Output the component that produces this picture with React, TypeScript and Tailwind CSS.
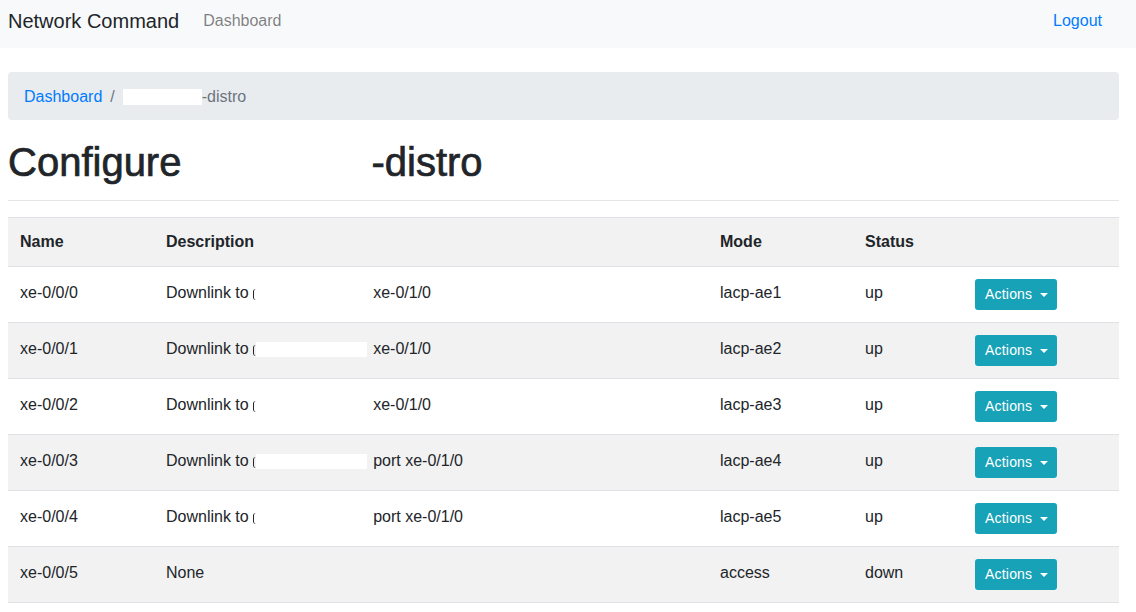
import React from 'react';

type Port = {
  name: string;
  desc: string | null;
  mode: string;
  status: string;
  shaded: boolean;
};

const ports: Port[] = [
  { name: 'xe-0/0/0', desc: 'xe-0/1/0', mode: 'lacp-ae1', status: 'up', shaded: false },
  { name: 'xe-0/0/1', desc: 'xe-0/1/0', mode: 'lacp-ae2', status: 'up', shaded: true },
  { name: 'xe-0/0/2', desc: 'xe-0/1/0', mode: 'lacp-ae3', status: 'up', shaded: false },
  { name: 'xe-0/0/3', desc: 'port xe-0/1/0', mode: 'lacp-ae4', status: 'up', shaded: true },
  { name: 'xe-0/0/4', desc: 'port xe-0/1/0', mode: 'lacp-ae5', status: 'up', shaded: false },
  { name: 'xe-0/0/5', desc: null, mode: 'access', status: 'down', shaded: true },
];

function ActionsButton() {
  return (
    <button className="inline-flex items-center h-[31px] pl-[10px] pr-[9px] rounded-[3px] bg-[#17a2b8] text-white text-sm leading-[21px] tracking-[0.2px]">
      Actions
      <span className="ml-2 w-0 h-0 border-t-[4px] border-t-white border-x-[4px] border-x-transparent" />
    </button>
  );
}

export default function App() {
  return (
    <div className="min-h-screen bg-white text-[#212529] text-base font-['Liberation_Sans',Arial,sans-serif]">
      {/* Navbar */}
      <nav className="h-12 bg-[#f8f9fa] flex items-center pl-2 pr-[34px] pb-[6px]">
        <span className="text-xl leading-[30px] mr-6">Network Command</span>
        <a className="text-[rgba(0,0,0,0.5)] leading-6">Dashboard</a>
        <a className="ml-auto text-[#007bff] leading-6">Logout</a>
      </nav>

      <div className="pl-2 pr-[17px]">
        {/* Breadcrumb */}
        <div className="mt-6 mb-4 bg-[#e9ecef] rounded px-4 pt-[13px] pb-[11px] flex items-center leading-6">
          <a className="text-[#007bff]">Dashboard</a>
          <span className="text-[#6c757d] px-2">/</span>
          <span className="inline-block w-[79px] h-[16px] bg-white" />
          <span className="text-[#6c757d]">-distro</span>
        </div>

        {/* Page title, device name redacted */}
        <h1 className="text-[40px] leading-[48px] font-medium pt-[3px] mb-[7px] flex items-center h-[48px] [-webkit-text-stroke:0.7px_#212529]">
          Configure
          <span className="inline-block w-[190px]" />
          -distro
        </h1>

        <hr className="mt-4 mb-4 border-t border-[rgba(0,0,0,0.1)]" />

        {/* Ports table */}
        <table className="w-full border-collapse">
          <thead>
            <tr className="bg-[#f2f2f2] border-t border-b border-[#dee2e6]">
              <th className="w-[146px] p-3 text-left font-bold leading-6">Name</th>
              <th className="w-[554px] p-3 text-left font-bold leading-6">Description</th>
              <th className="w-[145px] p-3 text-left font-bold leading-6">Mode</th>
              <th className="w-[110px] p-3 text-left font-bold leading-6">Status</th>
              <th className="p-3" />
            </tr>
          </thead>
          <tbody>
            {ports.map((p) => (
              <tr
                key={p.name}
                className={`border-b border-[#dee2e6] ${p.shaded ? 'bg-[#f2f2f2]' : 'bg-white'}`}
              >
                <td className="px-3 pt-[14px] pb-[10px] align-top leading-6">{p.name}</td>
                <td className="px-3 pt-[14px] pb-[10px] align-top leading-6">
                  {p.desc ? (
                    <span className="flex items-center">
                      Downlink to&nbsp;
                      <span className="inline-block w-[3px] h-[11px] mt-[2px] border-l-[1.5px] border-[#212529] rounded-l-full" />
                      <span className="inline-block w-[111px] h-[15px] bg-white" />
                      <span className="ml-[6px]">{p.desc}</span>
                    </span>
                  ) : (
                    'None'
                  )}
                </td>
                <td className="px-3 pt-[14px] pb-[10px] align-top leading-6">{p.mode}</td>
                <td className="px-3 pt-[14px] pb-[10px] align-top leading-6">{p.status}</td>
                <td className="p-3 align-top">
                  <ActionsButton />
                </td>
              </tr>
            ))}
          </tbody>
        </table>
      </div>
    </div>
  );
}
